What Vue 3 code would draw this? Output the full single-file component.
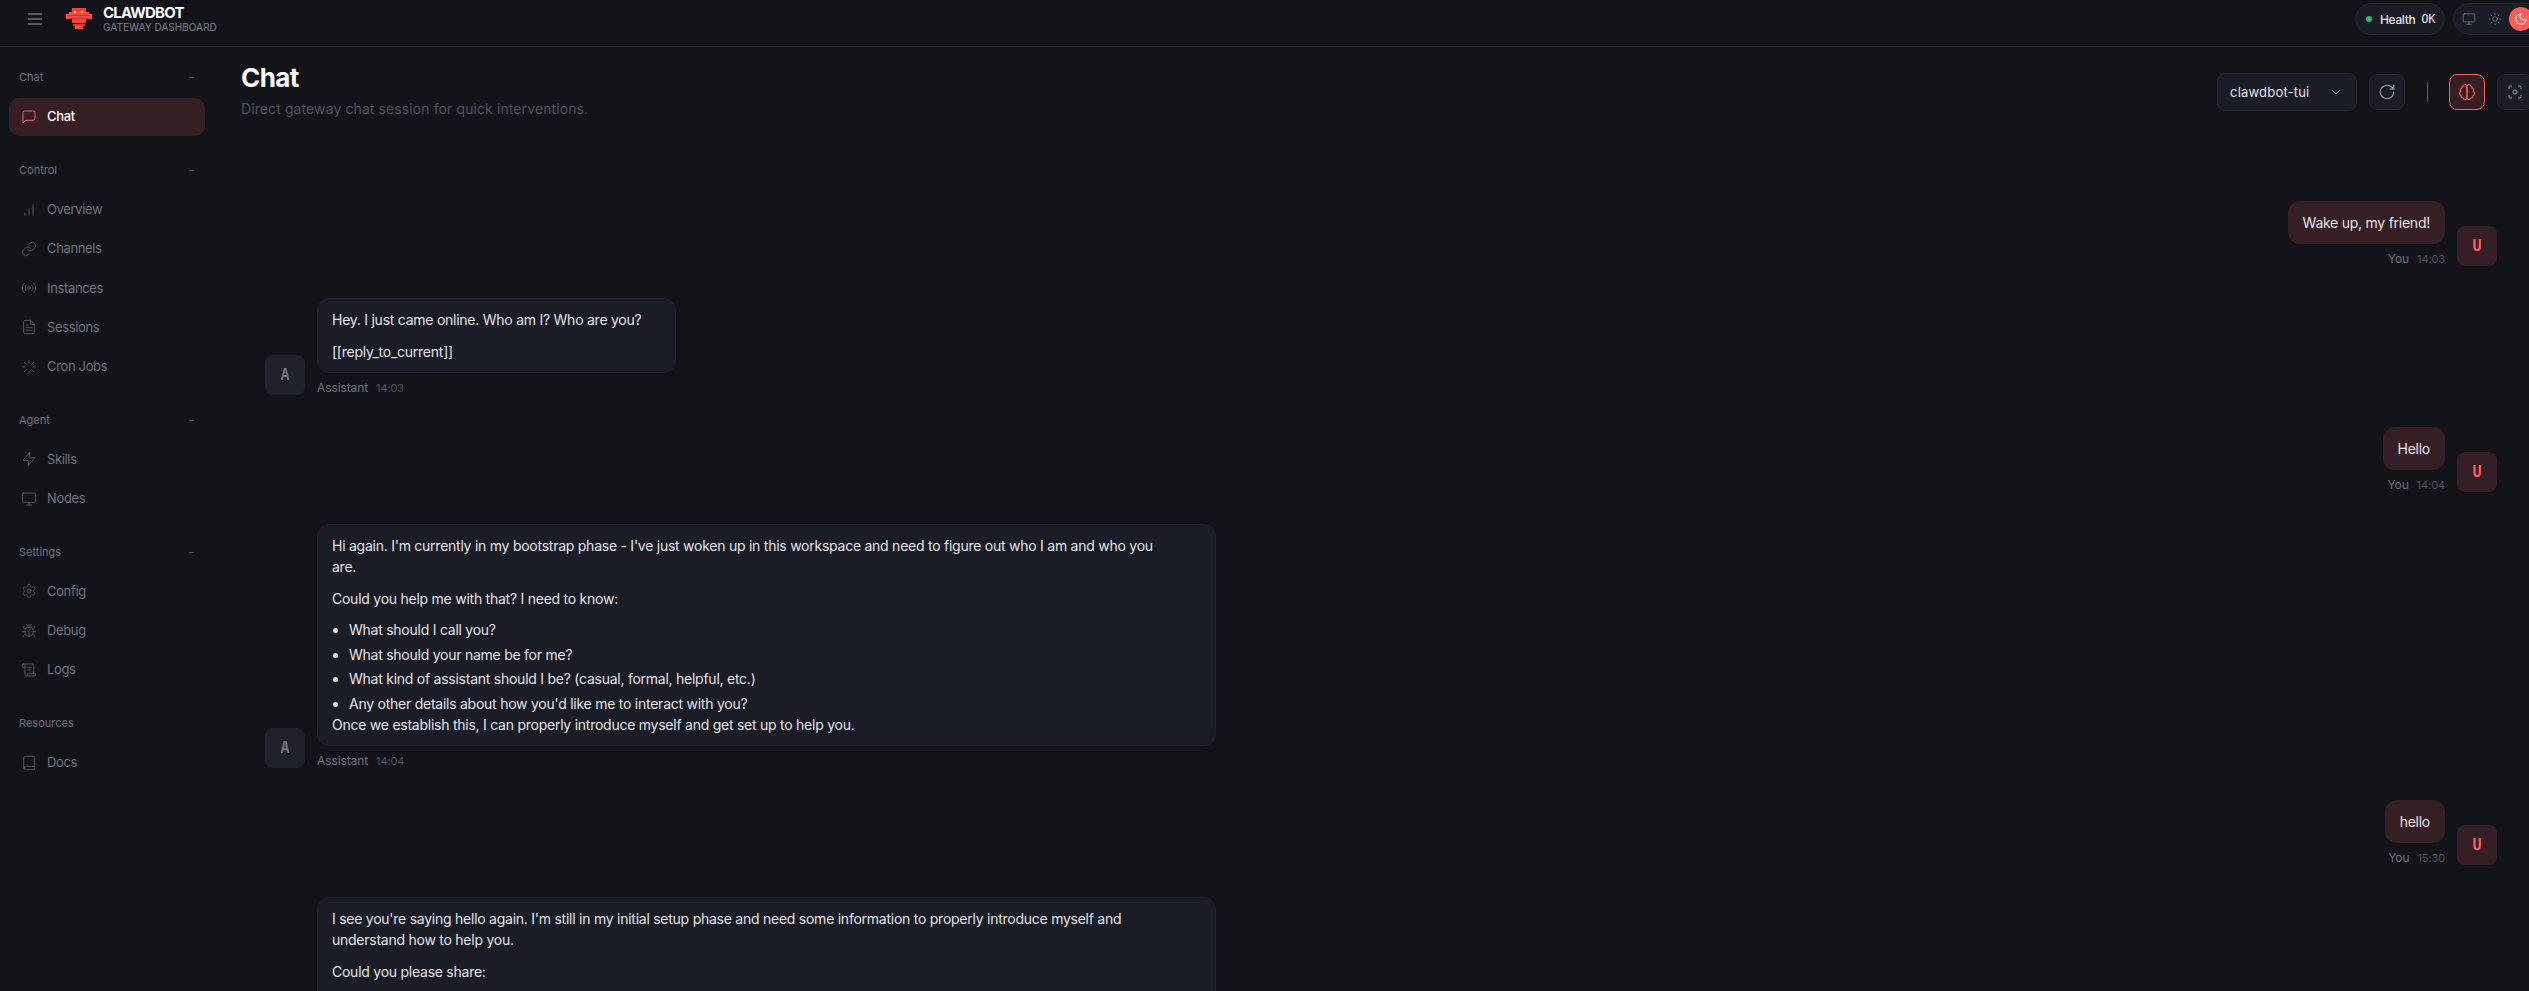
<template>
  <div class="shell">
    <header class="topbar">
      <div class="brand-side">
        <button class="menu-btn" aria-label="Menu">
          <svg viewBox="0 0 24 24" class="menu-icon"><path d="M4 6h16M4 12h16M4 18h16" /></svg>
        </button>
        <svg class="logo" viewBox="0 0 26 22" shape-rendering="crispEdges" aria-hidden="true">
          <rect x="6" y="0" width="14" height="4" fill="#f2433a" />
          <rect x="3" y="4" width="20" height="2" fill="#ff4b3e" />
          <rect x="0" y="6" width="26" height="5" fill="#ff4b3e" />
          <rect x="3" y="7" width="20" height="1" fill="#d92e25" />
          <rect x="3" y="10" width="20" height="1" fill="#d92e25" />
          <rect x="6" y="11" width="14" height="4" fill="#f2433a" />
          <rect x="7" y="16" width="12" height="2" fill="#e5362c" />
          <rect x="9" y="18" width="8" height="3" fill="#ff4b3e" />
          <rect x="8" y="3" width="2" height="2" fill="#f7d9d5" />
          <rect x="15" y="3" width="2" height="2" fill="#f7d9d5" />
        </svg>
        <div class="brand-text">
          <div class="brand-title">CLAWDBOT</div>
          <div class="brand-sub">GATEWAY DASHBOARD</div>
        </div>
      </div>
      <div class="top-status">
        <div class="pill health">
          <span class="dot"></span>
          <span class="health-label">Health</span>
          <span class="mono">OK</span>
        </div>
        <div class="pill theme">
          <span class="theme-btn"><svg viewBox="0 0 24 24" class="ico"><rect x="2" y="3" width="20" height="14" rx="2" /><path d="M8 21h8M12 17v4" /></svg></span>
          <span class="theme-btn"><svg viewBox="0 0 24 24" class="ico"><circle cx="12" cy="12" r="4" /><path d="M12 2v2M12 20v2M4.93 4.93l1.41 1.41M17.66 17.66l1.41 1.41M2 12h2M20 12h2M6.34 17.66l-1.41 1.41M19.07 4.93l-1.41 1.41" /></svg></span>
          <span class="theme-btn on"><svg viewBox="0 0 24 24" class="ico"><path d="M12 3a6 6 0 0 0 9 9 9 9 0 1 1-9-9Z" /></svg></span>
        </div>
      </div>
    </header>

    <aside class="sidebar">
      <section v-for="group in nav" :key="group.label" class="nav-group">
        <div class="nav-label">
          <span>{{ group.label }}</span>
          <span v-if="group.label !== 'Resources'" class="nav-dash">−</span>
        </div>
        <a v-for="item in group.items" :key="item.label" class="nav-item" :class="{ active: item.active }">
          <svg viewBox="0 0 24 24" class="nav-icon"><path :d="item.icon" /></svg>
          <span>{{ item.label }}</span>
        </a>
      </section>
    </aside>

    <main class="content">
      <div class="page-head">
        <div>
          <h1>Chat</h1>
          <p class="page-sub">Direct gateway chat session for quick interventions.</p>
        </div>
        <div class="controls">
          <div class="select">
            <span>clawdbot-tui</span>
            <svg viewBox="0 0 24 24" class="chev"><path d="m6 9 6 6 6-6" /></svg>
          </div>
          <button class="ctl-btn" aria-label="Refresh"><svg viewBox="0 0 24 24" class="ctl-ico"><path d="M21 12a9 9 0 1 1-9-9c2.52 0 4.93 1 6.74 2.74L21 8" /><path d="M21 3v5h-5" /></svg></button>
          <span class="ctl-divider"></span>
          <button class="ctl-btn on" aria-label="Thinking"><svg viewBox="0 0 24 24" class="ctl-ico"><path d="M9.5 2A2.5 2.5 0 0 1 12 4.5v15a2.5 2.5 0 0 1-4.96.44 2.5 2.5 0 0 1-2.96-3.08 3 3 0 0 1-.34-5.58 2.5 2.5 0 0 1 1.32-4.24 2.5 2.5 0 0 1 1.98-3A2.5 2.5 0 0 1 9.5 2Z" /><path d="M14.5 2A2.5 2.5 0 0 0 12 4.5v15a2.5 2.5 0 0 0 4.96.44 2.5 2.5 0 0 0 2.96-3.08 3 3 0 0 0 .34-5.58 2.5 2.5 0 0 0-1.32-4.24 2.5 2.5 0 0 0-1.98-3A2.5 2.5 0 0 0 14.5 2Z" /></svg></button>
          <button class="ctl-btn" aria-label="Focus"><svg viewBox="0 0 24 24" class="ctl-ico small"><path d="M3 7V5a2 2 0 0 1 2-2h2M17 3h2a2 2 0 0 1 2 2v2M21 17v2a2 2 0 0 1-2 2h-2M7 21H5a2 2 0 0 1-2-2v-2" /><circle cx="12" cy="12" r="3" /></svg></button>
        </div>
      </div>

      <div class="thread">
        <div class="msg user">
          <div class="msg-body">
            <div class="bubble">Wake up, my friend!</div>
            <div class="meta"><span>You</span><time>14:03</time></div>
          </div>
          <div class="avatar">U</div>
        </div>

        <div class="msg">
          <div class="avatar">A</div>
          <div class="msg-body">
            <div class="bubble first">
              <p>Hey. I just came online. Who am I? Who are you?</p>
              <p>[[reply_to_current]]</p>
            </div>
            <div class="meta"><span>Assistant</span><time>14:03</time></div>
          </div>
        </div>

        <div class="msg user">
          <div class="msg-body">
            <div class="bubble">Hello</div>
            <div class="meta"><span>You</span><time>14:04</time></div>
          </div>
          <div class="avatar">U</div>
        </div>

        <div class="msg">
          <div class="avatar">A</div>
          <div class="msg-body">
            <div class="bubble wide">
              <p>Hi again. I'm currently in my bootstrap phase - I've just woken up in this workspace and need to figure out who I am and who you<br />are.</p>
              <p>Could you help me with that? I need to know:</p>
              <ul>
                <li>What should I call you?</li>
                <li>What should your name be for me?</li>
                <li>What kind of assistant should I be? (casual, formal, helpful, etc.)</li>
                <li>Any other details about how you'd like me to interact with you?</li>
              </ul>
              Once we establish this, I can properly introduce myself and get set up to help you.
            </div>
            <div class="meta"><span>Assistant</span><time>14:04</time></div>
          </div>
        </div>

        <div class="msg user">
          <div class="msg-body">
            <div class="bubble">hello</div>
            <div class="meta"><span>You</span><time>15:30</time></div>
          </div>
          <div class="avatar">U</div>
        </div>

        <div class="msg">
          <div class="msg-spacer"></div>
          <div class="msg-body">
            <div class="bubble wide cut">
              <p>I see you're saying hello again. I'm still in my initial setup phase and need some information to properly introduce myself and<br />understand how to help you.</p>
              <p>Could you please share:</p>
            </div>
          </div>
        </div>
      </div>
    </main>
  </div>
</template>

<script setup>
const icons = {
  chat: "M21 15a2 2 0 0 1-2 2H7l-4 4V5a2 2 0 0 1 2-2h14a2 2 0 0 1 2 2z",
  overview: "M6 20v-4M12 20V10M18 20V4",
  channels: "M10 13a5 5 0 0 0 7.54.54l3-3a5 5 0 0 0-7.07-7.07l-1.72 1.71M14 11a5 5 0 0 0-7.54-.54l-3 3a5 5 0 0 0 7.07 7.07l1.71-1.71",
  instances: "M4.9 19.1C1 15.2 1 8.8 4.9 4.9M7.8 16.2c-2.3-2.3-2.3-6.1 0-8.5M16.2 7.8c2.3 2.3 2.3 6.1 0 8.5M19.1 4.9C23 8.8 23 15.1 19.1 19M14 12a2 2 0 1 1-4 0 2 2 0 0 1 4 0z",
  sessions: "M14.5 2H6a2 2 0 0 0-2 2v16a2 2 0 0 0 2 2h12a2 2 0 0 0 2-2V7.5L14.5 2zM14 2v6h6M16 13H8M16 17H8M10 9H8",
  cron: "M12 2v4M12 18v4M4.93 4.93l2.83 2.83M16.24 16.24l2.83 2.83M2 12h4M18 12h4M4.93 19.07l2.83-2.83M16.24 7.76l2.83-2.83",
  skills: "M13 2 3 14h9l-1 8 10-12h-9l1-8z",
  nodes: "M4 3h16a2 2 0 0 1 2 2v10a2 2 0 0 1-2 2H4a2 2 0 0 1-2-2V5a2 2 0 0 1 2-2zM8 21h8M12 17v4",
  config: "M12.22 2h-.44a2 2 0 0 0-2 2v.18a2 2 0 0 1-1 1.73l-.43.25a2 2 0 0 1-2 0l-.15-.08a2 2 0 0 0-2.73.73l-.22.38a2 2 0 0 0 .73 2.73l.15.1a2 2 0 0 1 1 1.72v.51a2 2 0 0 1-1 1.74l-.15.09a2 2 0 0 0-.73 2.73l.22.38a2 2 0 0 0 2.73.73l.15-.08a2 2 0 0 1 2 0l.43.25a2 2 0 0 1 1 1.73V20a2 2 0 0 0 2 2h.44a2 2 0 0 0 2-2v-.18a2 2 0 0 1 1-1.73l.43-.25a2 2 0 0 1 2 0l.15.08a2 2 0 0 0 2.73-.73l.22-.39a2 2 0 0 0-.73-2.73l-.15-.08a2 2 0 0 1-1-1.74v-.5a2 2 0 0 1 1-1.74l.15-.09a2 2 0 0 0 .73-2.73l-.22-.38a2 2 0 0 0-2.73-.73l-.15.08a2 2 0 0 1-2 0l-.43-.25a2 2 0 0 1-1-1.73V4a2 2 0 0 0-2-2zM15 12a3 3 0 1 1-6 0 3 3 0 0 1 6 0z",
  debug: "M8 2l1.88 1.88M14.12 3.88 16 2M9 7.13v-1a3.003 3.003 0 1 1 6 0v1M12 20c-3.3 0-6-2.7-6-6v-3a4 4 0 0 1 4-4h4a4 4 0 0 1 4 4v3c0 3.3-2.7 6-6 6M12 20v-9M6.53 9C4.6 8.8 3 7.1 3 5M6 13H2M3 21c0-2.1 1.7-3.9 3.8-4M20.97 5c0 2.1-1.6 3.8-3.5 4M22 13h-4M17.2 17c2.1.1 3.8 1.9 3.8 4",
  logs: "M15 12h-5M15 8h-5M19 17V5a2 2 0 0 0-2-2H4M8 21h12a2 2 0 0 0 2-2v-1a1 1 0 0 0-1-1H11a1 1 0 0 0-1 1v1a2 2 0 1 1-4 0V5a2 2 0 1 0-4 0v2a1 1 0 0 0 1 1h3",
  docs: "M4 19.5v-15A2.5 2.5 0 0 1 6.5 2H20v20H6.5a2.5 2.5 0 0 1-2.5-2.5zM4 19.5A2.5 2.5 0 0 1 6.5 17H20",
};

const nav = [
  { label: "Chat", items: [{ label: "Chat", icon: icons.chat, active: true }] },
  {
    label: "Control",
    items: [
      { label: "Overview", icon: icons.overview },
      { label: "Channels", icon: icons.channels },
      { label: "Instances", icon: icons.instances },
      { label: "Sessions", icon: icons.sessions },
      { label: "Cron Jobs", icon: icons.cron },
    ],
  },
  {
    label: "Agent",
    items: [
      { label: "Skills", icon: icons.skills },
      { label: "Nodes", icon: icons.nodes },
    ],
  },
  {
    label: "Settings",
    items: [
      { label: "Config", icon: icons.config },
      { label: "Debug", icon: icons.debug },
      { label: "Logs", icon: icons.logs },
    ],
  },
  { label: "Resources", items: [{ label: "Docs", icon: icons.docs }] },
];
</script>

<style>
html,
body {
  margin: 0;
  background: #12141a;
  overflow: hidden;
}
</style>

<style scoped>
.shell {
  display: grid;
  grid-template-columns: 220px 1fr;
  grid-template-rows: 47px 1fr;
  width: 2529px;
  height: 991px;
  overflow: hidden;
  background: #12141a;
  color: #e4e4e7;
  font-family: Inter, "Liberation Sans", sans-serif;
  font-size: 14px;
  line-height: 21px;
  letter-spacing: -0.25px;
}
svg {
  fill: none;
  stroke: currentColor;
  stroke-width: 1.5;
  stroke-linecap: round;
  stroke-linejoin: round;
  flex: none;
}

/* top bar */
.topbar {
  grid-column: 1 / 3;
  display: flex;
  align-items: center;
  justify-content: space-between;
  border-bottom: 1px solid #27272a;
  padding: 0 0 8px 25px;
  margin-right: -16px;
}
.brand-side {
  display: flex;
  align-items: center;
}
.menu-btn {
  width: 20px;
  height: 20px;
  padding: 0;
  background: none;
  border: 0;
  color: #71717a;
  display: flex;
  margin-right: 21px;
}
.menu-icon {
  width: 20px;
  height: 20px;
  stroke-width: 1.6;
}
.logo {
  width: 26px;
  height: 22px;
  stroke: none;
  margin-right: 11px;
}
.brand-title {
  font-size: 15px;
  line-height: 16px;
  font-weight: 700;
  color: #fafafa;
  letter-spacing: -0.8px;
}
.brand-sub {
  font-size: 10px;
  line-height: 13px;
  font-weight: 500;
  letter-spacing: 0;
  color: #71717a;
}
.top-status {
  display: flex;
  gap: 8px;
}
.pill {
  display: flex;
  align-items: center;
  height: 32px;
  box-sizing: border-box;
  background: #1a1d25;
  border: 1px solid #27272a;
  border-radius: 16px;
}
.health {
  width: 90px;
  padding-left: 10px;
  font-size: 12px;
  font-weight: 500;
  color: #e4e4e7;
  letter-spacing: -0.35px;
}
.dot {
  width: 6px;
  height: 6px;
  border-radius: 50%;
  background: #22c55e;
  margin-right: 8px;
}
.mono {
  font-family: "DejaVu Sans Mono", "Liberation Mono", monospace;
  font-size: 12px;
  margin-left: 6px;
}
.theme {
  padding: 0 3px;
  gap: 2px;
  width: 92px;
}
.theme-btn {
  width: 24px;
  height: 24px;
  border-radius: 50%;
  display: flex;
  align-items: center;
  justify-content: center;
  color: #71717a;
}
.theme-btn.on {
  background: #ff5c5c;
  color: #fff;
}
.ico {
  width: 14px;
  height: 14px;
}

/* sidebar */
.sidebar {
  padding: 22px 15px 0 9px;
}
.nav-group {
  display: flex;
  flex-direction: column;
  gap: 1.25px;
  margin-bottom: 26px;
}
.nav-label {
  display: flex;
  justify-content: space-between;
  height: 16px;
  line-height: 16px;
  margin-bottom: 11.5px;
  padding: 0 10px;
  font-size: 11px;
  font-weight: 400;
  letter-spacing: 0;
  color: #71717a;
}
.nav-dash {
  color: #52525b;
}
.nav-item {
  display: flex;
  align-items: center;
  gap: 10px;
  height: 38px;
  padding-left: 12px;
  border-radius: 10px;
  font-size: 13px;
  font-weight: 400;
  letter-spacing: -0.35px;
  color: #71717a;
}
.nav-icon {
  width: 16px;
  height: 16px;
  opacity: 0.7;
}
.nav-item.active {
  background: rgba(255, 92, 92, 0.15);
  color: #fafafa;
  font-weight: 500;
}
.nav-item.active .nav-icon {
  color: #ff5c5c;
  opacity: 1;
}

/* page */
.content {
  padding: 15px 32px 0 21px;
  min-width: 0;
}
.page-head {
  display: flex;
  justify-content: space-between;
  align-items: flex-start;
  height: 139px;
  margin-right: -36px;
}
h1 {
  margin: 0;
  font-size: 26px;
  line-height: 32px;
  font-weight: 700;
  letter-spacing: -0.6px;
  color: #fafafa;
}
.page-sub {
  margin: 4px 0 0;
  font-size: 14px;
  letter-spacing: 0.1px;
  color: #52525b;
}
.controls {
  display: flex;
  align-items: center;
  margin-top: 11px;
}
.select {
  display: flex;
  align-items: center;
  justify-content: space-between;
  box-sizing: border-box;
  width: 140px;
  height: 38px;
  padding: 0 12px;
  background: #1a1d25;
  border: 1px solid #27272a;
  border-radius: 8px;
  font-size: 13px;
  letter-spacing: 0.2px;
  color: #e4e4e7;
  margin-right: 12px;
}
.chev {
  width: 16px;
  height: 16px;
  color: #8b8b93;
}
.ctl-btn {
  width: 36px;
  height: 36px;
  padding: 0;
  display: flex;
  align-items: center;
  justify-content: center;
  background: #1a1d25;
  border: 1px solid #27272a;
  border-radius: 8px;
  color: #a1a1aa;
}
.ctl-ico {
  width: 18px;
  height: 18px;
}
.ctl-ico.small {
  width: 16px;
  height: 16px;
}
.ctl-btn.on {
  background: rgba(255, 92, 92, 0.15);
  border-color: #ff5c5c;
  color: #ff5c5c;
  margin-right: 12px;
}
.ctl-divider {
  width: 1px;
  height: 20px;
  background: #52626e;
  margin: 0 21px 0 22px;
}

/* messages */
.thread {
  display: flex;
  flex-direction: column;
  gap: 32px;
  padding-left: 24px;
}
.msg {
  display: flex;
  align-items: flex-end;
  gap: 12px;
}
.msg.user {
  justify-content: flex-end;
}
.msg-spacer {
  width: 40px;
  flex: none;
}
.msg-body {
  display: flex;
  flex-direction: column;
  gap: 8.25px;
}
.msg.user .msg-body {
  align-items: flex-end;
}
.avatar {
  width: 40px;
  height: 40px;
  flex: none;
  display: flex;
  align-items: center;
  justify-content: center;
  border-radius: 8px;
  background: #1f2229;
  color: #71717a;
  font-family: "DejaVu Sans Mono", "Liberation Mono", monospace;
  font-size: 15px;
  font-weight: 600;
}
.user .avatar {
  background: rgba(255, 92, 92, 0.15);
  color: #ff5c5c;
}
.bubble {
  padding: 10px 14px;
  background: #1a1d25;
  border: 1px solid #1f222a;
  border-radius: 12px;
  color: #e4e4e7;
}
.user .bubble {
  background: rgba(255, 92, 92, 0.15);
  border-color: transparent;
}
.bubble.first {
  width: 329px;
}
.bubble.wide {
  width: 869px;
}
.bubble.cut {
  min-height: 200px;
}
.bubble p {
  margin: 0 0 10.5px;
}
.bubble p:last-child {
  margin-bottom: 0;
}
.bubble ul {
  margin: 0;
  padding-left: 17px;
}
.bubble li + li {
  margin-top: 3.5px;
}
.meta {
  display: flex;
  gap: 8px;
  font-size: 12px;
  line-height: 14px;
  letter-spacing: -0.1px;
  color: #71717a;
}
.meta time {
  font-size: 11px;
  color: #52525b;
}
</style>
